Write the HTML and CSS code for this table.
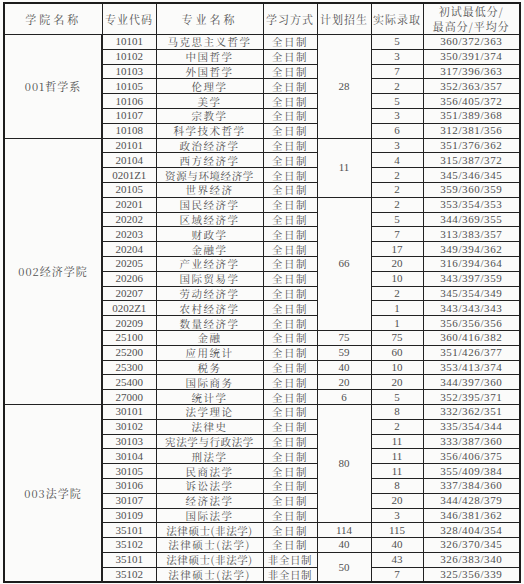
FILE: index.html
```html
<!DOCTYPE html>
<html lang="zh-CN">
<head>
<meta charset="utf-8">
<title>录取统计</title>
<link rel="stylesheet" href="styles.css">
</head>
<body>
<table class="sheet">
<colgroup>
<col class="c1"><col class="c2"><col class="c3"><col class="c4"><col class="c5"><col class="c6"><col class="c7">
</colgroup>
<thead>
<tr class="head">
<th class="wide">学院名称</th><th>专业代码</th><th class="wide">专业名称</th><th>学习方式</th><th>计划招生</th><th>实际录取</th><th class="two">初试最低分/<br>最高分/平均分</th>
</tr>
</thead>
<tbody>
<tr><td class="dept" rowspan="7">001哲学系</td><td class="num">10101</td><td>马克思主义哲学</td><td>全日制</td><td class="num" rowspan="7">28</td><td class="num">5</td><td class="score">360/372/363</td></tr>
<tr><td class="num">10102</td><td>中国哲学</td><td>全日制</td><td class="num">3</td><td class="score">350/391/374</td></tr>
<tr><td class="num">10103</td><td>外国哲学</td><td>全日制</td><td class="num">7</td><td class="score">317/396/363</td></tr>
<tr><td class="num">10105</td><td>伦理学</td><td>全日制</td><td class="num">2</td><td class="score">352/363/357</td></tr>
<tr><td class="num">10106</td><td>美学</td><td>全日制</td><td class="num">5</td><td class="score">356/405/372</td></tr>
<tr><td class="num">10107</td><td>宗教学</td><td>全日制</td><td class="num">3</td><td class="score">351/389/368</td></tr>
<tr><td class="num">10108</td><td>科学技术哲学</td><td>全日制</td><td class="num">6</td><td class="score">312/381/356</td></tr>

<tr><td class="dept" rowspan="18">002经济学院</td><td class="num">20101</td><td>政治经济学</td><td>全日制</td><td class="num" rowspan="4">11</td><td class="num">3</td><td class="score">351/376/362</td></tr>
<tr><td class="num">20104</td><td>西方经济学</td><td>全日制</td><td class="num">4</td><td class="score">315/387/372</td></tr>
<tr><td class="num">0201Z1</td><td class="tight">资源与环境经济学</td><td>全日制</td><td class="num">2</td><td class="score">345/346/345</td></tr>
<tr><td class="num">20105</td><td>世界经济</td><td>全日制</td><td class="num">2</td><td class="score">359/360/359</td></tr>
<tr><td class="num">20201</td><td>国民经济学</td><td>全日制</td><td class="num" rowspan="9">66</td><td class="num">2</td><td class="score">353/354/353</td></tr>
<tr><td class="num">20202</td><td>区域经济学</td><td>全日制</td><td class="num">5</td><td class="score">344/369/355</td></tr>
<tr><td class="num">20203</td><td>财政学</td><td>全日制</td><td class="num">7</td><td class="score">313/383/357</td></tr>
<tr><td class="num">20204</td><td>金融学</td><td>全日制</td><td class="num">17</td><td class="score">349/394/362</td></tr>
<tr><td class="num">20205</td><td>产业经济学</td><td>全日制</td><td class="num">20</td><td class="score">316/394/364</td></tr>
<tr><td class="num">20206</td><td>国际贸易学</td><td>全日制</td><td class="num">10</td><td class="score">343/397/359</td></tr>
<tr><td class="num">20207</td><td>劳动经济学</td><td>全日制</td><td class="num">2</td><td class="score">345/354/349</td></tr>
<tr><td class="num">0202Z1</td><td>农村经济学</td><td>全日制</td><td class="num">1</td><td class="score">343/343/343</td></tr>
<tr><td class="num">20209</td><td>数量经济学</td><td>全日制</td><td class="num">1</td><td class="score">356/356/356</td></tr>
<tr><td class="num">25100</td><td>金融</td><td>全日制</td><td class="num">75</td><td class="num">75</td><td class="score">360/416/382</td></tr>
<tr><td class="num">25200</td><td>应用统计</td><td>全日制</td><td class="num">59</td><td class="num">60</td><td class="score">351/426/377</td></tr>
<tr><td class="num">25300</td><td>税务</td><td>全日制</td><td class="num">40</td><td class="num">10</td><td class="score">353/413/374</td></tr>
<tr><td class="num">25400</td><td>国际商务</td><td>全日制</td><td class="num">20</td><td class="num">20</td><td class="score">344/397/360</td></tr>
<tr><td class="num">27000</td><td>统计学</td><td>全日制</td><td class="num">6</td><td class="num">5</td><td class="score">352/395/371</td></tr>

<tr><td class="dept" rowspan="12">003法学院</td><td class="num">30101</td><td>法学理论</td><td>全日制</td><td class="num" rowspan="8">80</td><td class="num">8</td><td class="score">332/362/351</td></tr>
<tr><td class="num">30102</td><td>法律史</td><td>全日制</td><td class="num">2</td><td class="score">335/354/344</td></tr>
<tr><td class="num">30103</td><td class="tight">宪法学与行政法学</td><td>全日制</td><td class="num">11</td><td class="score">333/387/360</td></tr>
<tr><td class="num">30104</td><td>刑法学</td><td>全日制</td><td class="num">11</td><td class="score">356/406/375</td></tr>
<tr><td class="num">30105</td><td>民商法学</td><td>全日制</td><td class="num">11</td><td class="score">355/409/384</td></tr>
<tr><td class="num">30106</td><td>诉讼法学</td><td>全日制</td><td class="num">8</td><td class="score">337/384/360</td></tr>
<tr><td class="num">30107</td><td>经济法学</td><td>全日制</td><td class="num">20</td><td class="score">344/428/379</td></tr>
<tr><td class="num">30109</td><td>国际法学</td><td>全日制</td><td class="num">3</td><td class="score">346/381/362</td></tr>
<tr><td class="num">35101</td><td class="tight">法律硕士(非法学)</td><td>全日制</td><td class="num">114</td><td class="num">115</td><td class="score">328/404/354</td></tr>
<tr><td class="num">35102</td><td>法律硕士(法学)</td><td>全日制</td><td class="num">40</td><td class="num">40</td><td class="score">326/370/345</td></tr>
<tr><td class="num">35101</td><td class="tight">法律硕士(非法学)</td><td class="tight">非全日制</td><td class="num" rowspan="2">50</td><td class="num">43</td><td class="score">326/383/340</td></tr>
<tr><td class="num">35102</td><td>法律硕士(法学)</td><td class="tight">非全日制</td><td class="num">7</td><td class="score">325/356/339</td></tr>
</tbody>
</table>
</body>
</html>
```
FILE: styles.css
```css
html, body {
  margin: 0;
  padding: 0;
  background: #fbfbfa;
}

body {
  padding: 2px 0 0 3px;
  font-family: "Noto Serif CJK SC", "Liberation Serif", "Noto Sans CJK SC", serif;
  color: #505050;
}

.sheet {
  width: 516px;
  border-collapse: collapse;
  table-layout: fixed;
  border: 2px solid #1c1c1c;
}

.c1 { width: 98px; }
.c2 { width: 54px; }
.c3 { width: 107px; }
.c4 { width: 54px; }
.c5 { width: 54px; }
.c6 { width: 52px; }
.c7 { width: 97px; }

.sheet th,
.sheet td {
  border: 1px solid #222;
  padding: 0;
  text-align: center;
  vertical-align: middle;
  white-space: nowrap;
  overflow: hidden;
}

.sheet th {
  height: 29px;
  font-weight: normal;
  font-size: 11px;
  line-height: 14px;
  letter-spacing: 1px;
  color: #555;
}

.sheet th.wide {
  letter-spacing: 3px;
}

.sheet th.two {
  line-height: 15px;
  letter-spacing: 1px;
}

.sheet tbody tr {
  height: 14.8px;
}

.sheet td {
  font-size: 10.5px;
  letter-spacing: 1.5px;
  line-height: 13px;
  height: 13.8px;
}

.sheet td.tight {
  letter-spacing: 0.6px;
}

.sheet td.num {
  font-family: "Liberation Serif", serif;
  font-size: 11px;
  letter-spacing: 0;
}

.sheet td.score {
  font-family: "Liberation Serif", serif;
  font-size: 11px;
  letter-spacing: 0.6px;
}

.sheet td.dept {
  font-size: 11px;
  letter-spacing: 1px;
  border-right-width: 2px;
}
```
